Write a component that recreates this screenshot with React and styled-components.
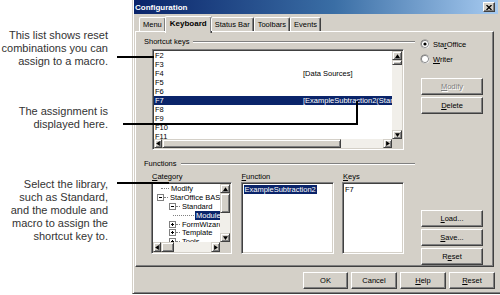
import React from "react";
import styled, { createGlobalStyle } from "styled-components";

const Global = createGlobalStyle`
  html, body {
    margin: 0;
    padding: 0;
    background: #fff;
  }
  body {
    font-family: "Liberation Sans", Arial, sans-serif;
  }
`;

const Page = styled.div`
  position: relative;
  width: 500px;
  height: 295px;
  display: flex;
  overflow: hidden;
`;

const Notes = styled.div`
  width: 132px;
  flex-shrink: 0;
  display: flex;
  flex-direction: column;
  align-items: flex-end;
  padding: 29px 24px 0 0;
  box-sizing: border-box;
`;

const Note = styled.p`
  margin: ${p => p.$top}px 0 0;
  font-size: 11px;
  line-height: 13px;
  color: #333;
  text-align: right;
  white-space: nowrap;
`;

const Pointer = styled.div`
  position: absolute;
  left: ${p => p.$x}px;
  top: ${p => p.$y}px;
  width: ${p => p.$w}px;
  height: ${p => p.$h}px;
  background: #000;
  z-index: 5;
`;

const Dialog = styled.div`
  flex: 1;
  height: 294px;
  box-sizing: border-box;
  background: #d4d0c8;
  border-left: 1px solid #d4d0c8;
  border-bottom: 1px solid #404040;
  box-shadow: inset 1px 0 #fff, inset 0 -1px #808080;
  padding: 0 2px 0 1px;
  display: flex;
  flex-direction: column;
  font-size: 7.5px;
  color: #000;
`;

const TitleBar = styled.div`
  height: 14px;
  display: flex;
  align-items: center;
  justify-content: space-between;
  padding: 0 3px 0 1px;
  background: linear-gradient(to right, #0a246a, #3a6ea5 55%, #a6caf0);
  color: #fff;
  font-weight: bold;
  font-size: 8px;
`;

const CloseBox = styled.div`
  width: 12px;
  height: 10px;
  box-sizing: border-box;
  background: #d4d0c8;
  border: 1px solid;
  border-color: #fff #404040 #404040 #fff;
  box-shadow: inset -1px -1px #808080;
  display: flex;
  align-items: center;
  justify-content: center;
`;

const TabStrip = styled.div`
  display: flex;
  align-items: flex-end;
  height: 15px;
  margin-top: 2px;
  padding-left: 5px;
  position: relative;
  z-index: 2;
`;

const Tab = styled.div`
  height: ${p => (p.$active ? 17 : 14)}px;
  margin: 0 ${p => (p.$active ? -1 : 0)}px ${p => (p.$active ? -2 : 0)}px;
  padding: 0 ${p => (p.$active ? 4 : 3)}px;
  box-sizing: border-box;
  background: #d4d0c8;
  border-top: 1px solid #fff;
  border-left: 1px solid #fff;
  border-right: 1px solid #404040;
  box-shadow: inset -1px 0 #808080;
  border-radius: 2px 2px 0 0;
  display: flex;
  align-items: ${p => (p.$active ? "flex-start" : "center")};
  padding-top: ${p => (p.$active ? 2 : 0)}px;
  font-weight: ${p => (p.$active ? "bold" : "normal")};
  font-size: ${p => (p.$active ? 8 : 7.5)}px;
  white-space: nowrap;
`;

const Panel = styled.div`
  height: 236px;
  margin: 0 4px 0 1px;
  box-sizing: border-box;
  border: 1px solid;
  border-color: #fff #404040 #404040 #fff;
  box-shadow: inset -1px -1px #808080;
  padding: 5px 10px 1px 8px;
  display: flex;
  gap: 6px;
`;

const LeftCol = styled.div`
  flex: 1;
  display: flex;
  flex-direction: column;
`;

const RightCol = styled.div`
  width: 62px;
  display: flex;
  flex-direction: column;
`;

const GroupHead = styled.div`
  display: flex;
  align-items: center;
  height: 9px;
  margin-top: ${p => p.$top || 0}px;
  white-space: nowrap;
`;

const Etched = styled.div`
  flex: 1;
  margin-left: 4px;
  border-top: 1px solid #808080;
  border-bottom: 1px solid #fff;
`;

const Indent = styled.div`
  margin: 3px 0 0 8px;
`;

const Field = styled.div`
  box-sizing: border-box;
  width: ${p => p.$w}px;
  height: ${p => p.$h}px;
  border: 1px solid;
  border-color: #808080 #fff #fff #808080;
  box-shadow: inset 1px 1px #404040, inset -1px -1px #d4d0c8;
  padding: 1px;
  background: #fff;
  overflow: hidden;
`;

const ScrollArea = styled.div`
  width: 100%;
  height: 100%;
  display: grid;
  grid-template-columns: 1fr 10px;
  grid-template-rows: 1fr ${p => p.$bar || 10}px;
`;

const Rows = styled.div`
  overflow: hidden;
  padding-top: ${p => p.$pad || 0}px;
`;

const KeyRow = styled.div`
  display: grid;
  grid-template-columns: 148px 1fr;
  height: 9px;
  line-height: 9px;
  padding-left: 1px;
  white-space: nowrap;
  overflow: hidden;
  background: ${p => (p.$sel ? "#0a246a" : "transparent")};
  color: ${p => (p.$sel ? "#fff" : "#000")};
`;

const Bar = styled.div`
  display: flex;
  flex-direction: ${p => (p.$vertical ? "column" : "row")};
  background: #f1efea;
  overflow: hidden;
`;

const BarSpace = styled.div`
  flex: 1;
`;

const Raised = styled.div`
  flex-shrink: 0;
  width: ${p => (p.$w ? `${p.$w}px` : "auto")};
  height: ${p => (p.$h ? `${p.$h}px` : "auto")};
  box-sizing: border-box;
  background: #d4d0c8;
  border: 1px solid;
  border-color: #d4d0c8 #404040 #404040 #d4d0c8;
  box-shadow: inset 1px 1px #fff, inset -1px -1px #808080;
  display: flex;
  align-items: center;
  justify-content: center;
`;

const Corner = styled.div`
  background: #d4d0c8;
`;

const Cols = styled.div`
  display: grid;
  grid-template-columns: 81px 93px 62px;
  column-gap: 8.5px;
  margin: 4px 0 0 7px;
`;

const Col = styled.div`
  display: flex;
  flex-direction: column;
`;

const SubLabel = styled.div`
  height: 9px;
  line-height: 9px;
  margin: 0 0 1px 1px;
  white-space: nowrap;
`;

const TreeRow = styled.div`
  display: flex;
  align-items: center;
  height: 8.9px;
  padding-left: ${p => p.$indent}px;
  white-space: nowrap;
`;

const Dots = styled.div`
  width: ${p => p.$w}px;
  flex-shrink: 0;
  border-top: 1px dotted #808080;
  margin-right: 1px;
`;

const Sel = styled.span`
  background: ${p => (p.$on ? "#0a246a" : "transparent")};
  color: ${p => (p.$on ? "#fff" : "#000")};
  padding: 0 1px;
  line-height: 9px;
`;

const PlainRow = styled.div`
  height: 9px;
  line-height: 9px;
  padding-left: 1px;
  margin-top: 1px;
  white-space: nowrap;
`;

const RadioRow = styled.div`
  display: flex;
  align-items: center;
  gap: 3px;
  height: 10px;
  margin: ${p => p.$top}px 0 0 -1px;
  white-space: nowrap;
`;

const Button = styled.div`
  width: ${p => p.$w || 62}px;
  height: 17px;
  margin-top: ${p => p.$top || 0}px;
  flex-shrink: 0;
  box-sizing: border-box;
  background: #d4d0c8;
  border: 1px solid;
  border-color: #fff #404040 #404040 #fff;
  box-shadow: inset -1px -1px #808080;
  display: flex;
  align-items: center;
  justify-content: center;
  color: ${p => (p.$disabled ? "#808080" : "#000")};
  text-shadow: ${p => (p.$disabled ? "1px 1px #fff" : "none")};
  white-space: nowrap;
`;

const BottomGroup = styled.div`
  margin-top: auto;
  display: flex;
  flex-direction: column;
  gap: 2px;
`;

const Footer = styled.div`
  display: flex;
  justify-content: flex-end;
  gap: 3px;
  margin-top: 5px;
  padding-right: 3px;
`;

const U = styled.span`
  text-decoration: underline;
`;

function Arrow({ dir }) {
  const pts = {
    up: "0,3 2,0 4,3",
    down: "0,0 4,0 2,3",
    left: "3,0 3,4 0,2",
    right: "0,0 0,4 3,2",
  }[dir];
  const vert = dir === "up" || dir === "down";
  return (
    <svg width={vert ? 5 : 4} height={vert ? 4 : 5} viewBox={vert ? "0 0 4 3" : "0 0 3 4"}>
      <polygon points={pts} fill="#000" />
    </svg>
  );
}

function VScroll({ thumb }) {
  return (
    <Bar $vertical>
      <Raised $w={10} $h={9}><Arrow dir="up" /></Raised>
      <Raised $w={10} $h={thumb} />
      <BarSpace />
      <Raised $w={10} $h={9}><Arrow dir="down" /></Raised>
    </Bar>
  );
}

function HScroll({ thumb }) {
  return (
    <Bar>
      <Raised $w={8}><Arrow dir="left" /></Raised>
      <Raised $w={thumb} />
      <BarSpace />
      <Raised $w={9}><Arrow dir="right" /></Raised>
    </Bar>
  );
}

function Expander({ open }) {
  return (
    <svg width="7" height="7" viewBox="0 0 7 7" style={{ flexShrink: 0 }}>
      <rect x="0.5" y="0.5" width="6" height="6" fill="#fff" stroke="#808080" />
      <line x1="2" y1="3.5" x2="5" y2="3.5" stroke="#000" />
      {!open && <line x1="3.5" y1="2" x2="3.5" y2="5" stroke="#000" />}
    </svg>
  );
}

function Radio({ on }) {
  return (
    <svg width="10" height="10" viewBox="0 0 10 10">
      <circle cx="5" cy="5" r="4.5" fill="#808080" />
      <circle cx="5.4" cy="5.4" r="4.1" fill="#fff" />
      <circle cx="5" cy="5" r="3.6" fill="#fff" stroke="#404040" strokeWidth="0.6" />
      {on && <circle cx="5" cy="5" r="1.6" fill="#000" />}
    </svg>
  );
}

const keys = [
  ["F2", ""],
  ["F3", ""],
  ["F4", "[Data Sources]"],
  ["F5", ""],
  ["F6", ""],
  ["F7", "[ExampleSubtraction2(Standard.Module1)]"],
  ["F8", ""],
  ["F9", ""],
  ["F10", ""],
  ["F11", ""],
];

const tree = [
  { indent: 8, line: 8, label: "Modify" },
  { indent: 4, exp: "open", label: "StarOffice BASIC" },
  { indent: 16, exp: "open", label: "Standard" },
  { indent: 20, line: 21, label: "Module1", sel: true },
  { indent: 16, exp: "closed", label: "FormWizard" },
  { indent: 16, exp: "closed", label: "Template" },
  { indent: 16, exp: "closed", label: "Tools" },
];

export default function App() {
  return (
    <Page>
      <Global />
      <Notes>
        <Note $top={0}>
          This list shows reset<br />combinations you can<br />assign to a macro.
        </Note>
        <Note $top={36.5}>
          The assignment is<br />displayed here.
        </Note>
        <Note $top={47}>
          Select the library,<br />such as Standard,<br />and the module and<br />macro to assign the<br />shortcut key to.
        </Note>
      </Notes>

      <Pointer $x={117} $y={56} $w={37} $h={2} />
      <Pointer $x={123} $y={123} $w={235} $h={2} />
      <Pointer $x={356} $y={101} $w={2} $h={24} />
      <Pointer $x={117} $y={182} $w={52} $h={2} />

      <Dialog>
        <TitleBar>
          <span>Configuration</span>
          <CloseBox>
            <svg width="6" height="5" viewBox="0 0 6 5">
              <path d="M0.5 0 L5.5 5 M5.5 0 L0.5 5" stroke="#000" strokeWidth="1.3" />
            </svg>
          </CloseBox>
        </TitleBar>

        <TabStrip>
          <Tab>Menu</Tab>
          <Tab $active>Keyboard</Tab>
          <Tab>Status Bar</Tab>
          <Tab>Toolbars</Tab>
          <Tab>Events</Tab>
        </TabStrip>

        <Panel>
          <LeftCol>
            <GroupHead>
              Shortcut keys
              <Etched />
            </GroupHead>
            <Indent>
              <Field $w={252} $h={101}>
                <ScrollArea $bar={9}>
                  <Rows>
                    {keys.map(([k, v]) => (
                      <KeyRow key={k} $sel={k === "F7"}>
                        <span>{k}</span>
                        <span>{v}</span>
                      </KeyRow>
                    ))}
                  </Rows>
                  <VScroll thumb={5} />
                  <HScroll thumb={179} />
                  <Corner />
                </ScrollArea>
              </Field>
            </Indent>

            <GroupHead $top={9}>
              Functions
              <Etched />
            </GroupHead>

            <Cols>
              <Col>
                <SubLabel><U>C</U>ategory</SubLabel>
                <Field $w={81} $h={72}>
                  <ScrollArea>
                    <Rows $pad={-1.5}>
                      {tree.map(r => (
                        <TreeRow key={r.label} $indent={r.indent}>
                          {r.exp && <Expander open={r.exp === "open"} />}
                          <Dots $w={r.line || 4} />
                          <Sel $on={r.sel}>{r.label}</Sel>
                        </TreeRow>
                      ))}
                    </Rows>
                    <VScroll thumb={20} />
                    <HScroll thumb={13} />
                    <Corner />
                  </ScrollArea>
                </Field>
              </Col>
              <Col>
                <SubLabel><U>F</U>unction</SubLabel>
                <Field $w={93} $h={72}>
                  <PlainRow><Sel $on>ExampleSubtraction2</Sel></PlainRow>
                </Field>
              </Col>
              <Col>
                <SubLabel><U>K</U>eys</SubLabel>
                <Field $w={62} $h={72}>
                  <PlainRow>F7</PlainRow>
                </Field>
              </Col>
            </Cols>
          </LeftCol>

          <RightCol>
            <RadioRow $top={2}>
              <Radio on />
              <span>Sta<U>r</U>Office</span>
            </RadioRow>
            <RadioRow $top={5}>
              <Radio />
              <span><U>W</U>riter</span>
            </RadioRow>
            <Button $top={14} $disabled>
              <span><U>M</U>odify</span>
            </Button>
            <Button $top={2}>
              <span><U>D</U>elete</span>
            </Button>
            <BottomGroup>
              <Button><span><U>L</U>oad...</span></Button>
              <Button><span><U>S</U>ave...</span></Button>
              <Button><span>R<U>e</U>set</span></Button>
            </BottomGroup>
          </RightCol>
        </Panel>

        <Footer>
          <Button $w={45}>OK</Button>
          <Button $w={46}>Cancel</Button>
          <Button $w={46}><span><U>H</U>elp</span></Button>
          <Button $w={46}><span><U>R</U>eset</span></Button>
        </Footer>
      </Dialog>
    </Page>
  );
}
